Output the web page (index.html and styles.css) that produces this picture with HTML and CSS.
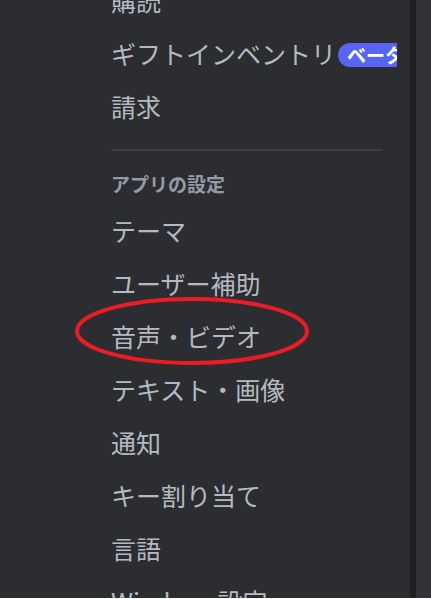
FILE: index.html
```html
<!DOCTYPE html>
<html lang="ja">
<head>
<meta charset="utf-8">
<title>設定</title>
<link rel="stylesheet" href="styles.css">
</head>
<body>
<div class="app">
  <aside class="sidebar">
    <nav class="nav">
      <div class="item">購読</div>
      <div class="item">ギフトインベントリ<span class="badge">ベータ</span></div>
      <div class="item">請求</div>
      <div class="divider"></div>
      <div class="header">アプリの設定</div>
      <div class="item">テーマ</div>
      <div class="item">ユーザー補助</div>
      <div class="item">音声・ビデオ</div>
      <div class="item">テキスト・画像</div>
      <div class="item">通知</div>
      <div class="item">キー割り当て</div>
      <div class="item">言語</div>
      <div class="item">Windows設定</div>
    </nav>
  </aside>
  <div class="gutter"></div>
  <main class="content"></main>
  <svg class="annotation" width="431" height="598" viewBox="0 0 431 598">
    <ellipse cx="192" cy="331" rx="115" ry="32" fill="none" stroke="#ed1c24" stroke-width="4"/>
  </svg>
</div>
<div class="bottom-edge"></div>
</body>
</html>
```

FILE: styles.css
```css
html, body {
  margin: 0;
  padding: 0;
  background: #ffffff;
}
body {
  width: 431px;
  height: 599px;
  overflow: hidden;
  font-family: "Noto Sans CJK JP", "Noto Sans", sans-serif;
}
.app {
  position: relative;
  display: flex;
  height: 598px;
  overflow: hidden;
}
.sidebar {
  width: 410px;
  flex: none;
  background: #2b2d31;
  padding-left: 95px;
  padding-right: 13px;
  box-sizing: border-box;
  overflow: hidden;
}
.nav {
  width: 302px;
  margin-top: -27px;
  overflow: hidden;
}
.item {
  display: flex;
  align-items: center;
  height: 53px;
  padding: 0 16px;
  font-size: 25px;
  line-height: 30px;
  color: #b5bac1;
  white-space: nowrap;
}
.badge {
  flex: none;
  margin-left: 2px;
  margin-top: 4px;
  height: 24px;
  line-height: 24px;
  padding: 0 10px 0 9px;
  border-radius: 12px;
  background: #5865f2;
  color: #ffffff;
  font-size: 19px;
  font-weight: 700;
}
.divider {
  height: 2px;
  margin: 16.5px 15px 12px 16px;
  background: #3d3f45;
}
.header {
  padding: 8px 16px 8px;
  font-size: 19px;
  line-height: 25px;
  font-weight: 700;
  color: #949ba4;
  white-space: nowrap;
}
.gutter {
  width: 6px;
  flex: none;
  background: #1e1f22;
}
.content {
  flex: 1;
  background: #313338;
}
.annotation {
  position: absolute;
  left: 0;
  top: 0;
  pointer-events: none;
}
.bottom-edge {
  height: 1px;
  background: #ffffff;
}
```
